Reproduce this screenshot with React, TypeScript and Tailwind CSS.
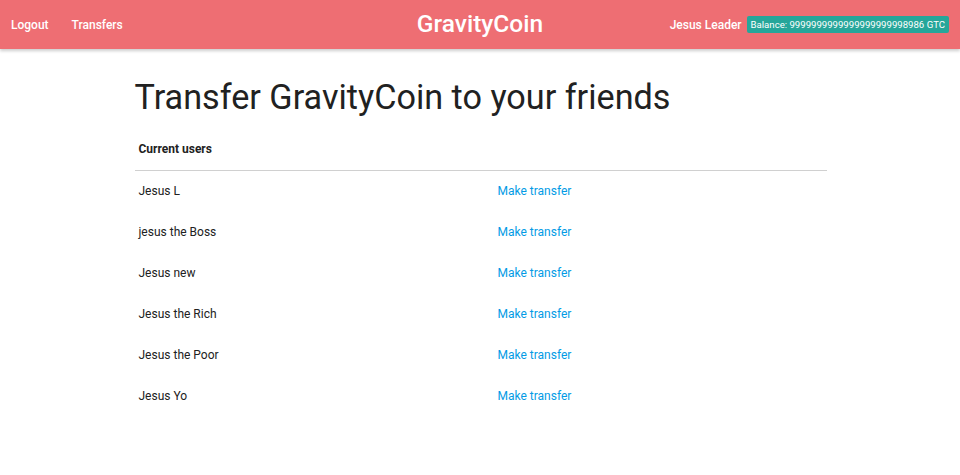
import React from 'react';

const users = ['Jesus L', 'jesus the Boss', 'Jesus new', 'Jesus the Rich', 'Jesus the Poor', 'Jesus Yo'];

export default function App() {
  return (
    <div className="min-h-[475px] bg-white font-['Roboto',sans-serif] text-[#212121]">
      <nav className="relative flex h-[49px] items-center bg-[#ee6e73] px-[11px] text-white shadow-[0_2px_3px_rgba(0,0,0,0.2)]">
        <div className="flex gap-[23px] text-[12px] font-medium">
          <a>Logout</a>
          <a>Transfers</a>
        </div>
        <div className="absolute left-1/2 top-0 flex h-full -translate-x-1/2 items-center text-[24.5px] font-medium">
          GravityCoin
        </div>
        <div className="ml-auto flex items-center gap-[5px]">
          <span className="text-[12px] font-medium">Jesus Leader</span>
          <span className="rounded-[2px] bg-[#26a69a] px-[4px] py-[2px] text-[9.6px] leading-[13.5px]">
            Balance: 9999999999999999999998986 GTC
          </span>
        </div>
      </nav>
      <main className="mx-auto w-[693px] pl-[1px]">
        <h1 className="mt-[24px] text-[34.2px] leading-[48px] font-normal text-[#212121]">
          Transfer GravityCoin to your friends
        </h1>
        <table className="mt-[8px] w-full text-left text-[12px]">
          <thead>
            <tr className="h-[41px] border-b border-[#d0d0d0]">
              <th className="px-[4px] font-bold">Current users</th>
              <th></th>
            </tr>
          </thead>
          <tbody>
            {users.map((u) => (
              <tr key={u} className="h-[41px]">
                <td className="w-[359px] px-[4px]">{u}</td>
                <td className="px-[4px] text-[#039be5]">Make transfer</td>
              </tr>
            ))}
          </tbody>
        </table>
      </main>
    </div>
  );
}
